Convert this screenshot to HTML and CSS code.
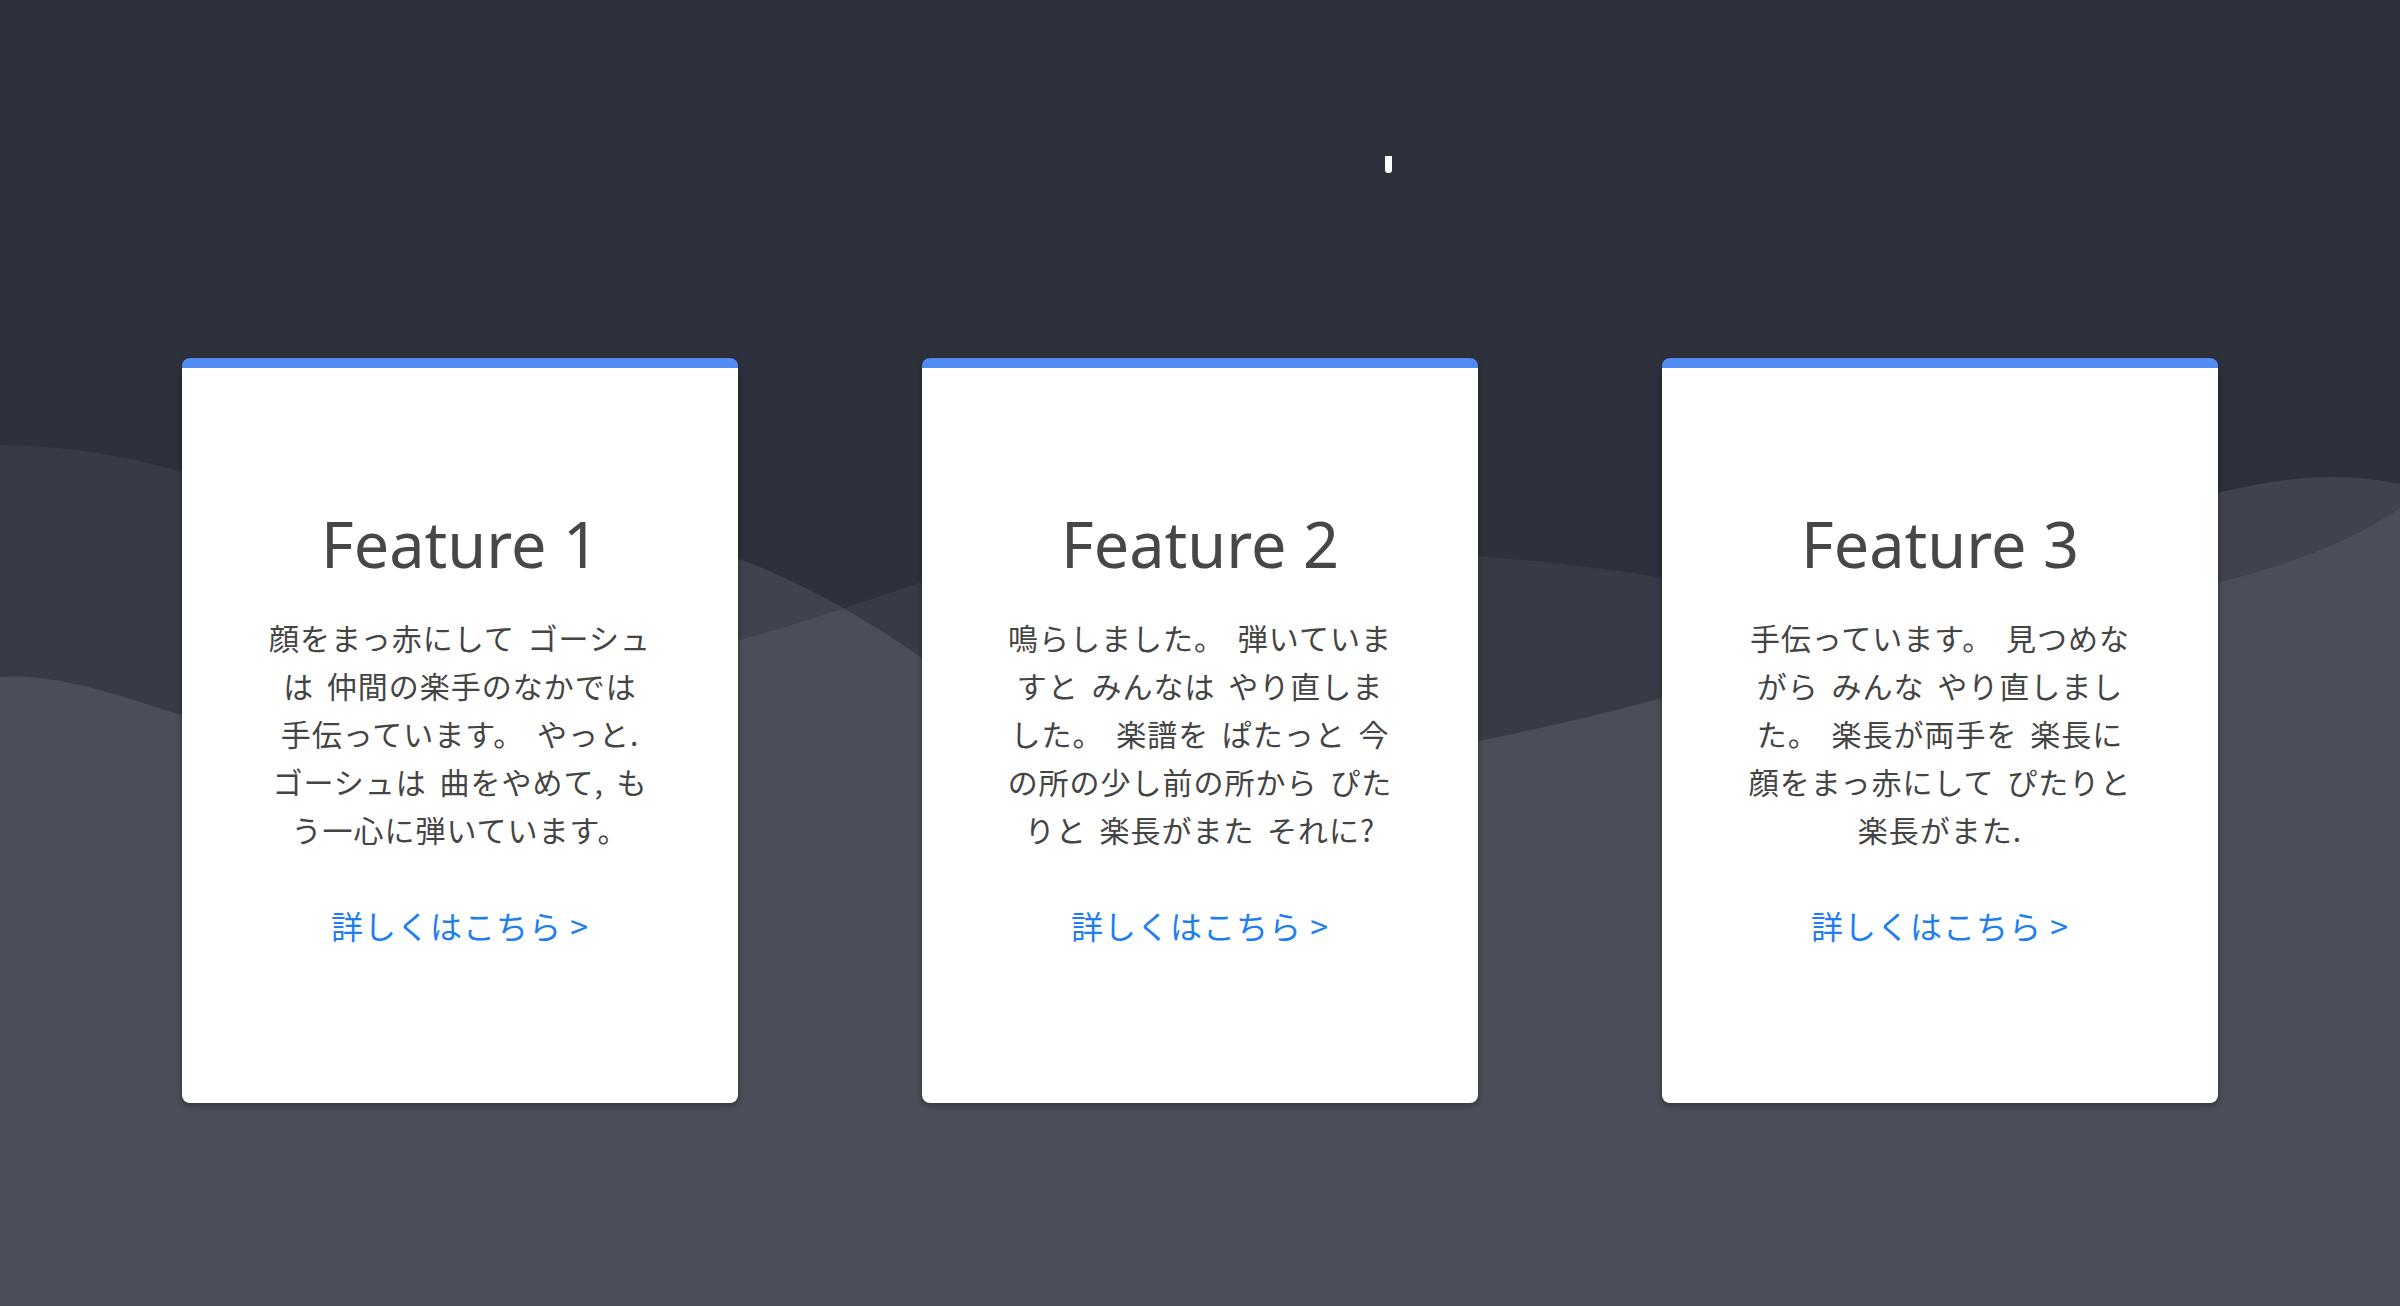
FILE: index.html
```html
<!DOCTYPE html>
<html lang="ja">
<head>
<meta charset="utf-8">
<title>Features</title>
<link rel="stylesheet" href="styles.css">
</head>
<body>
<div class="page">
  <svg class="waves" width="2400" height="1306" viewBox="0 0 2400 1306" aria-hidden="true">
    <defs>
      <clipPath id="clipL">
        <path d="M0,677 C60,672 130,700 182,715 C262,735 480,535 620,535 C720,535 840,600 922,658 C984,696 1100,765 1250,765 C1400,765 1560,725 1662,698 C1800,657 2150,477 2330,477 C2360,477 2380,480 2400,484 L2400,1306 L0,1306 Z"/>
      </clipPath>
    </defs>
    <path fill="#40424d" d="M0,677 C60,672 130,700 182,715 C262,735 480,535 620,535 C720,535 840,600 922,658 C984,696 1100,765 1250,765 C1400,765 1560,725 1662,698 C1800,657 2150,477 2330,477 C2360,477 2380,480 2400,484 L2400,1306 L0,1306 Z"/>
    <path fill="#383b46" d="M0,445 C80,446 140,460 182,472 C260,494 470,665 600,665 C680,665 840,610 922,582 C1000,556 1200,548 1300,548 C1400,548 1560,560 1662,578 C1760,595 1850,612 1950,612 C2080,612 2280,590 2400,508 L2400,1306 L0,1306 Z"/>
    <path fill="#4b4e58" clip-path="url(#clipL)" d="M0,445 C80,446 140,460 182,472 C260,494 470,665 600,665 C680,665 840,610 922,582 C1000,556 1200,548 1300,548 C1400,548 1560,560 1662,578 C1760,595 1850,612 1950,612 C2080,612 2280,590 2400,508 L2400,1306 L0,1306 Z"/>
  </svg>

  <header class="hero"><span class="tick"></span></header>

  <section class="features">
    <article class="card">
      <h2 class="card-title">Feature 1</h2>
      <p class="card-text">顔をまっ赤にして ゴーシュは 仲間の楽手のなかでは 手伝っています。 やっと. ゴーシュは 曲をやめて, もう一心に弾いています。</p>
      <a class="card-link" href="#">詳しくはこちら &gt;</a>
    </article>
    <article class="card">
      <h2 class="card-title">Feature 2</h2>
      <p class="card-text">鳴らしました。 弾いていますと みんなは やり直しました。 楽譜を ぱたっと 今の所の少し前の所から ぴたりと 楽長がまた それに?</p>
      <a class="card-link" href="#">詳しくはこちら &gt;</a>
    </article>
    <article class="card">
      <h2 class="card-title">Feature 3</h2>
      <p class="card-text">手伝っています。 見つめながら みんな やり直しました。 楽長が両手を 楽長に 顔をまっ赤にして ぴたりと 楽長がまた.</p>
      <a class="card-link" href="#">詳しくはこちら &gt;</a>
    </article>
  </section>
</div>
</body>
</html>
```

FILE: styles.css
```css
html, body {
  margin: 0;
  padding: 0;
}

body {
  background: #2e313c;
  font-family: "Noto Sans CJK JP", "Noto Sans", sans-serif;
}

.page {
  position: relative;
  width: 2400px;
  height: 1306px;
  overflow: hidden;
}

.waves {
  position: absolute;
  left: 0;
  top: 0;
  display: block;
}

.hero {
  position: relative;
  height: 358px;
  box-sizing: border-box;
  padding-top: 156px;
  padding-left: 1385px;
}

.tick {
  display: block;
  width: 7px;
  height: 17px;
  background: #ffffff;
  border-radius: 0 0 3px 3px;
}

.features {
  position: relative;
  display: flex;
  justify-content: space-between;
  width: 2036px;
  margin: 0 auto;
}

.card {
  width: 556px;
  height: 745px;
  box-sizing: border-box;
  background: #ffffff;
  border-top: 10px solid #4f8bf3;
  border-radius: 8px;
  box-shadow: 0 2px 6px rgba(0, 0, 0, 0.35);
  padding-top: 138px;
  text-align: center;
}

.card-title {
  margin: 0;
  font-family: "Noto Sans", "Open Sans", sans-serif;
  font-weight: 400;
  font-size: 63px;
  line-height: 75.6px;
  color: #474747;
}

.card-text {
  width: 390px;
  margin: 31px auto 0;
  font-size: 30px;
  line-height: 48px;
  letter-spacing: 1px;
  word-spacing: 5px;
  color: #444444;
}

.card-link {
  display: inline-block;
  margin-top: 50px;
  font-size: 32px;
  line-height: 45px;
  letter-spacing: 1px;
  color: #1e7ef0;
  text-decoration: none;
}
```
